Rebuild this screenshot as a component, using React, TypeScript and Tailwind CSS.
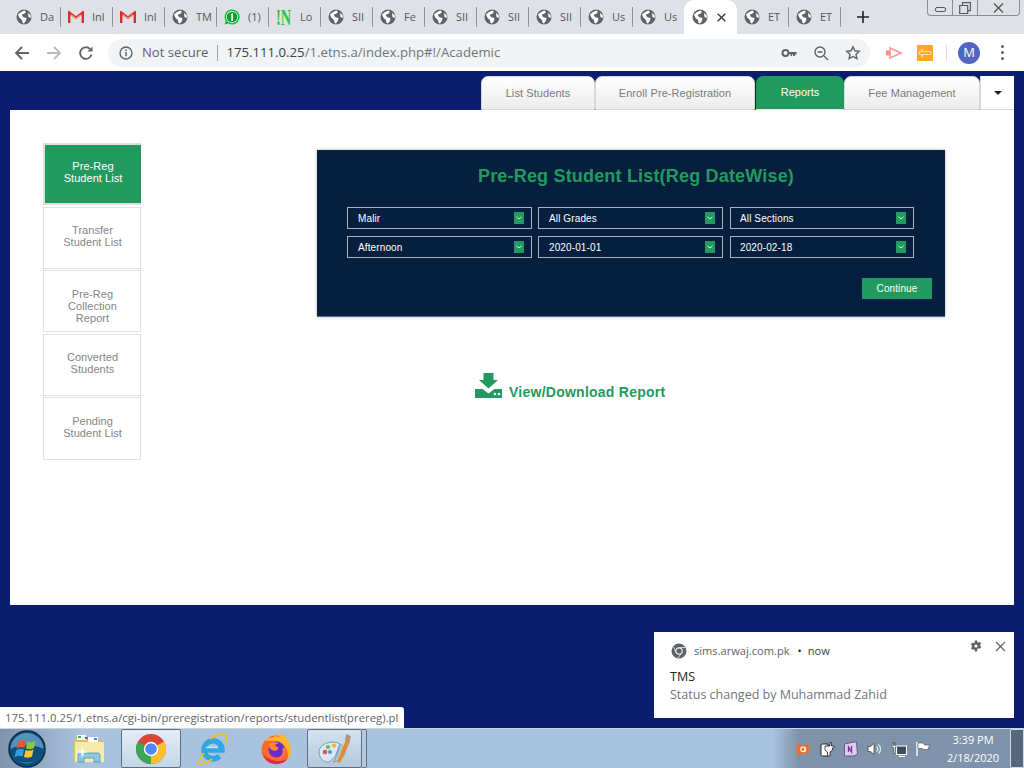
import React from 'react';

const Globe = () => (
  <svg width="16" height="16" viewBox="0 0 16 16" className="shrink-0">
    <circle cx="8" cy="8" r="7.500" fill="#5f6368" />
    <path d="M2 5.500 L5 3 L8.500 1.500 L10 3 L8 5 L6.500 5 L6 7 L8 8.500 L10.500 9 L10 12 L8 14.500 L6.500 14 L6 11 L3.500 9 Z" fill="#fff" />
    <path d="M12 4 L14.500 6 L15 9 L12.500 8 Z" fill="#fff" />
  </svg>
);

const GmailIcon = () => (
  <svg width="16" height="12" viewBox="0 0 16 12" className="shrink-0">
    <path d="M1.200 12V1.500L8 6.800l6.800-5.300V12" fill="none" stroke="#d93025" strokeWidth="2.400" />
    <path d="M3 3 8 6.800 13 3v1.500L8 8.300 3 4.500Z" fill="#e8a29c" />
  </svg>
);

const WhatsApp = () => (
  <svg width="16" height="16" viewBox="0 0 16 16" className="shrink-0">
    <path d="M8 .5a7.500 7.500 0 1 1-3.600 14L.6 15.500l1-3.700A7.500 7.500 0 0 1 8 .5Z" fill="#10c23c" />
    <circle cx="8" cy="8" r="6" fill="#fff" />
    <circle cx="8" cy="8" r="5.300" fill="#0f9d35" />
    <path d="M6.800 5 8.900 4v8H7.300V6L6.500 6.300Z" fill="#fff" />
  </svg>
);

const NIcon = () => (
  <svg width="16" height="17" viewBox="0 0 16 17" className="shrink-0">
    <text transform="translate(0 16) scale(.8 1.300)" fontFamily="Liberation Serif, serif" fontWeight="700" fontSize="18" fill="#2cc14a">!N</text>
  </svg>
);

type TabProps = { icon: React.ReactNode; label?: string; sep?: boolean; w?: string };
const Tab = ({ icon, label, sep = true, w = 'w-[52px]' }: TabProps) => (
  <div className={`${w} h-[20px] flex items-center pl-[7px] gap-[8px] ${sep ? 'border-r border-[#8f9296]' : ''}`}>
    {icon}
    <span className="whitespace-nowrap text-[11px] leading-[14px] text-[#55585c]">{label}</span>
  </div>
);

const ChromeLogo = () => (
  <svg width="32" height="32" viewBox="0 0 32 32">
    <circle cx="16" cy="16" r="15" fill="#db4437" />
    <path d="M16 16 29 8.500A15 15 0 0 1 16 31Z" fill="#fbc02d" />
    <path d="M16 16 16 31A15 15 0 0 1 3 8.500Z" fill="#3aa757" />
    <circle cx="16" cy="16" r="7.200" fill="#fff" />
    <circle cx="16" cy="16" r="5.800" fill="#4a8af4" />
  </svg>
);

const IELogo = () => (
  <svg width="32" height="32" viewBox="0 0 32 32">
    <path d="M7.500 17H25A9 9 0 1 0 22.500 23" fill="none" stroke="#2fa6e6" strokeWidth="5.500" />
    <path d="M9 14.500h12" stroke="#bfe9fb" strokeWidth="1.500" />
    <path d="M7 20C2 27 0 31 4 31c3 0 7-2 11-5M13 6C20 1 30-1 30 4c0 2-1 4-2 6" fill="none" stroke="#f0c020" strokeWidth="1.800" />
  </svg>
);

const FirefoxLogo = () => (
  <svg width="32" height="32" viewBox="0 0 32 32">
    <circle cx="16" cy="17" r="14.500" fill="#ff6a2b" />
    <path d="M5 8C7 5 9 4 11 5c3-2 6-2 8-1 1-1 1-2 1-4 6 3 11 9 11 17 0 4-1 7-3 9 1-9-4-17-12-18-4-.5-8 0-11 0Z" fill="#ffb52e" />
    <path d="M3 21c2 6 7 10 13 10 5 0 9-2 11-5-8 4-18 2-24-5Z" fill="#e5225f" />
    <circle cx="16.500" cy="16.500" r="8" fill="#6f2bc9" />
    <path d="M9 11c3-2 7-2 10-1-3 1-4 2-4 3 2 1 4 1 3 3-1 2-4 2-6 1-2-1-3-3-3-6Z" fill="#ff8a30" />
    <path d="M24.500 15c.5 5-2 9-6 10.500 4-3 5-6 4-10Z" fill="#ff9533" />
  </svg>
);

const PaintLogo = () => (
  <svg width="34" height="32" viewBox="0 0 34 32">
    <path d="M1 19c0-6 7-10 14-10 3 0 5 1 7 2l-5 13c-3 1-3 4-6 5-5 1-10-4-10-10Z" fill="#d8e8f3" stroke="#7f9ab2" />
    <path d="M22 11c4 2 6 5 5 9s-6 8-12 9c3-2 2-4 4-6Z" fill="#a9cde3" stroke="#7f9ab2" />
    <circle cx="7" cy="19" r="2.300" fill="#e0544a" />
    <circle cx="10" cy="14" r="2.100" fill="#6cb75a" />
    <circle cx="16" cy="12.500" r="2.100" fill="#e6b63c" />
    <circle cx="12" cy="19" r="2" fill="#5a93d0" />
    <path d="M27 9 19 29l3 1L31 11Z" fill="#e88a2a" />
    <path d="M28 1l5 2-2 8-4-2Z" fill="#b79468" />
  </svg>
);

const ExplorerLogo = () => (
  <svg width="32" height="30" viewBox="0 0 32 30">
    <path d="M1 4h12l2 2h16v22H1Z" fill="#dcbf63" />
    <rect x="4" y="1" width="9" height="5" fill="#fff" />
    <rect x="15" y="3" width="10" height="5" fill="#fff" />
    <rect x="5" y="2" width="3" height="2" fill="#3cb53c" />
    <rect x="12" y="3" width="3" height="2" fill="#d8443c" />
    <rect x="21" y="4" width="3" height="2" fill="#3d8ed8" />
    <path d="M2 8h29v20H2Z" fill="#f8eaaa" />
    <path d="M5 28v-7c0-1 1-2 2-2h18c1 0 2 1 2 2v7h-6v-4H11v4Z" fill="#8cc8e4" stroke="#3f89b5" strokeWidth=".7" />
    <path d="M9 12l2 5 4 1-4 1-2 5-1-5-5-1 5-1Z" fill="#fff" opacity=".85" />
  </svg>
);

const WinOrb = () => (
  <svg width="38" height="38" viewBox="0 0 38 38">
    <circle cx="19" cy="19" r="18" fill="#0f4f7d" stroke="#0c2c48" strokeWidth="1.500" />
    <path d="M2.500 19A16.500 16 0 0 1 35.500 19C26 14 12 14 2.500 19Z" fill="#6fa8cf" opacity=".75" />
    <path d="M10 31a16 14 0 0 0 18 0c-5 2-13 2-18 0Z" fill="#3fb0d8" opacity=".8" />
    <path d="M10 12c3-2 5-2 8-1l-1.500 7c-3-1-5-1-8 1Z" fill="#e8552f" />
    <path d="M19.500 11.500c3 1 5 1 8-.5l-1.500 7c-3 1.500-5 1.500-8 .5Z" fill="#8dc63f" />
    <path d="M8 20.500c3-2 5-2 8-1l-1.500 7c-3-1-5-1-8 1Z" fill="#2f9fe0" />
    <path d="M17.500 20c3 1 5 1 8-.5l-1.500 7c-3 1.500-5 1.500-8 .5Z" fill="#fcc52a" />
  </svg>
);

const Chevron = () => (
  <span className="w-[10px] h-[12px] bg-[#229a5f] flex items-center justify-center">
    <svg width="6" height="4" viewBox="0 0 6 4"><path d="M.5 .8 3 3 5.500 .8" fill="none" stroke="#d5efe2" strokeWidth="1" /></svg>
  </span>
);

const Select = ({ label, w = 'w-[185px] pl-[10px]' }: { label: string; w?: string }) => (
  <div className={`${w} h-[22px] border border-[#a9b1bb] flex items-center justify-between pr-[7px] text-[10px] tracking-[0.12px] text-white`}>
    <span>{label}</span>
    <Chevron />
  </div>
);

const SideItem = ({ lines, active, h = 'h-[62px]' }: { lines: string[]; active?: boolean; h?: string }) => (
  <div className={`w-[98px] ${h} flex flex-col items-center text-[11px] leading-[12px] tracking-[0.05px] ${active ? 'border-2 border-r-0 border-[#dedede] pt-[15px] bg-[#229a5f] text-white' : 'border border-[#e2e2e2] pt-[16.600px] pl-[1px] bg-white text-[#858585]'}`}>
    {lines.map((l) => <span key={l}>{l}</span>)}
  </div>
);

const PageTab = ({ label, w }: { label: string; w: string }) => (
  <div className={`${w} h-[34px] rounded-t-[7px] border border-[#d8d8d8] bg-gradient-to-b from-white to-[#ececec] flex items-center justify-center text-[11px] tracking-[0.08px] text-[#7a7a7a]`}>
    {label}
  </div>
);

export default function App() {
  const uiFont = { fontFamily: '"Open Sans", "Noto Sans", sans-serif' };
  return (
    <div className="relative w-[1024px] h-[768px] overflow-hidden flex flex-col bg-[#0c1c6e] font-['Liberation_Sans',Arial,sans-serif]">
      {/* Tab strip */}
      <div className="h-[34px] bg-[#dee1e6] flex items-start shrink-0" style={uiFont}>
        <div className="flex items-start pl-[9px] pt-[7px] h-[34px]">
          <Tab icon={<Globe />} label="Da" />
          <Tab icon={<GmailIcon />} label="Inl" />
          <Tab icon={<GmailIcon />} label="Inl" />
          <Tab icon={<Globe />} label="TM" />
          <Tab icon={<WhatsApp />} label="(1)" />
          <Tab icon={<NIcon />} label="Lo" />
          <Tab icon={<Globe />} label="SII" />
          <Tab icon={<Globe />} label="Fe" />
          <Tab icon={<Globe />} label="SII" />
          <Tab icon={<Globe />} label="SII" />
          <Tab icon={<Globe />} label="SII" />
          <Tab icon={<Globe />} label="Us" />
          <Tab icon={<Globe />} label="Us" sep={false} w="w-[51px]" />
        </div>
        <div className="h-[34px] w-[53px] bg-white rounded-t-[10px] flex items-center pl-[8px] gap-[9px] shrink-0">
          <Globe />
          <svg width="9" height="9" viewBox="0 0 9 9"><path d="M.7.7l7.600 7.600M8.300.7 .7 8.300" stroke="#3c4043" strokeWidth="1.500" /></svg>
        </div>
        <div className="flex items-start pt-[7px] h-[34px]">
          <Tab icon={<Globe />} label="ET" />
          <Tab icon={<Globe />} label="ET" />
        </div>
        <svg width="14" height="14" viewBox="0 0 14 14" className="ml-[15px] mt-[10px]"><path d="M7 1v12M1 7h12" stroke="#202124" strokeWidth="1.600" /></svg>
        <div className="ml-[57px] flex h-[16px] border border-t-0 border-[#8b8e92] rounded-b-[4px]">
          <div className="w-[25px] flex items-center justify-center border-r border-[#8b8e92]">
            <span className="w-[11px] h-[5px] border border-[#55585c] rounded-[2px] mt-[4px]" />
          </div>
          <div className="w-[25px] flex items-center justify-center border-r border-[#8b8e92]">
            <svg width="12" height="12" viewBox="0 0 12 12"><path d="M3.500 3V.7h8v8H9M.7 3.500h8v8h-8Z" fill="none" stroke="#55585c" strokeWidth="1.200" /></svg>
          </div>
          <div className="w-[41px] flex items-center justify-center">
            <svg width="11" height="10" viewBox="0 0 11 10"><path d="M1 .5l9 9M10 .5l-9 9" stroke="#55585c" strokeWidth="1.400" /></svg>
          </div>
        </div>
      </div>

      {/* Toolbar */}
      <div className="h-[37px] bg-white flex items-center shrink-0 pl-[14px]" style={uiFont}>
        <svg width="16" height="16" viewBox="0 0 16 16"><path d="M15 8H2M8 2 2 8l6 6" fill="none" stroke="#5f6368" strokeWidth="1.800" /></svg>
        <svg width="16" height="16" viewBox="0 0 16 16" className="ml-[16px]"><path d="M1 8h13M8 2l6 6-6 6" fill="none" stroke="#b9bbbe" strokeWidth="1.800" /></svg>
        <svg width="16" height="16" viewBox="0 0 16 16" className="ml-[16px]"><path d="M13.500 9.500A5.800 5.800 0 1 1 12 4" fill="none" stroke="#5f6368" strokeWidth="1.800" /><path d="M14.500 1.500v5h-5Z" fill="#5f6368" /></svg>
        <div className="ml-[14px] w-[762px] h-[28px] rounded-full bg-[#f1f3f4] flex items-center pl-[11px]">
          <svg width="14" height="14" viewBox="0 0 14 14"><circle cx="7" cy="7" r="6" fill="none" stroke="#5f6368" strokeWidth="1.300" /><path d="M7 6v4.200" stroke="#5f6368" strokeWidth="1.500" /><path d="M7 3.500v1.500" stroke="#5f6368" strokeWidth="1.500" /></svg>
          <span className="ml-[9px] text-[#5f6368] text-[13.100px]">Not secure</span>
          <span className="ml-[9px] w-px h-[16px] bg-[#9aa0a6]" />
          <span className="ml-[8px] text-[#3c4043] text-[13.200px]">175.111.0.25<span className="text-[#70757a]">/1.etns.a/index.php#!/Academic</span></span>
          <div className="ml-auto flex items-center gap-[16px] pr-[9px]">
            <svg width="16" height="16" viewBox="0 0 16 16"><circle cx="4.500" cy="8" r="3" fill="none" stroke="#5f6368" strokeWidth="2" /><path d="M7.500 7h8v2.500h-1.500v1.500h-2V9.500h-1V11h-1.500V9H7.500Z" fill="#5f6368" /></svg>
            <svg width="16" height="16" viewBox="0 0 16 16"><circle cx="7" cy="7" r="5" fill="none" stroke="#5f6368" strokeWidth="1.400" /><path d="M4.500 7h5M11 11l4 4" stroke="#5f6368" strokeWidth="1.400" /></svg>
            <svg width="16" height="16" viewBox="0 0 16 16"><path d="M8 1.800l1.900 4 4.400.5-3.300 3 .9 4.400L8 11.500l-3.900 2.200.9-4.400-3.300-3 4.400-.5Z" fill="none" stroke="#5f6368" strokeWidth="1.400" /></svg>
          </div>
        </div>
        <svg width="18" height="14" viewBox="0 0 18 14" className="ml-[15px]"><rect x="1" y="4.500" width="4.500" height="5" fill="#fb8c8c" /><path d="M5 2v10l11-5Z" fill="none" stroke="#fb9a9a" strokeWidth="1.700" /></svg>
        <div className="ml-[14px] w-[16px] h-[16px] bg-[#ffa726] flex items-center justify-center">
          <svg width="12" height="8" viewBox="0 0 12 8"><path d="M.5 2.500h2V.5h1v2h8v3h-8v2h-1v-2h-2Z" fill="none" stroke="#ffe7bd" strokeWidth=".9" /></svg>
        </div>
        <span className="ml-[13px] w-px h-[16px] bg-[#d9dbde]" />
        <div className="ml-[11px] w-[22px] h-[22px] rounded-full bg-[#5365c0] text-white text-[13px] flex items-center justify-center">M</div>
        <div className="ml-[21px] flex flex-col gap-[3px]">
          <span className="w-[3px] h-[3px] rounded-full bg-[#5f6368]" />
          <span className="w-[3px] h-[3px] rounded-full bg-[#5f6368]" />
          <span className="w-[3px] h-[3px] rounded-full bg-[#5f6368]" />
        </div>
      </div>

      {/* Page */}
      <div className="flex-1 flex flex-col min-h-0">
        <div className="h-[39px] pt-[5px] pr-[10px] flex justify-end shrink-0">
          <PageTab label="List Students" w="w-[114px]" />
          <PageTab label="Enroll Pre-Registration" w="w-[160px]" />
          <div className="ml-[1px] w-[88px] h-[34px] rounded-t-[7px] bg-[#229a5f] border-b border-[#e4e4e4] flex items-center justify-center text-[11px] text-white">Reports</div>
          <PageTab label="Fee Management" w="w-[136px]" />
          <div className="w-[34px] h-[34px] bg-white border-l border-b border-[#d8d8d8] flex items-center justify-center">
            <span className="w-0 h-0 border-x-[4px] border-x-transparent border-t-[4px] border-t-[#222]" />
          </div>
        </div>

        <div className="mx-[10px] h-[495px] bg-white flex pt-[33px] pl-[33px] shrink-0">
          <div className="flex flex-col gap-[1.500px] w-[98px]">
            <SideItem lines={['Pre-Reg', 'Student List']} active />
            <SideItem lines={['Transfer', 'Student List']} />
            <SideItem lines={['Pre-Reg', 'Collection', 'Report']} />
            <SideItem lines={['Converted', 'Students']} />
            <SideItem lines={['Pending', 'Student List']} h="h-[63px]" />
          </div>

          <div className="ml-[176px] mt-[7px] w-[628px] flex flex-col">
            <div className="h-[167px] bg-[#071f3e] border-b border-[#5a6b80] shadow-[0_0_3px_rgba(0,0,0,0.3)] flex flex-col pl-[30px]">
              <h1 className="mt-[16px] pr-[20px] text-center text-[18px] leading-[21px] font-bold tracking-[0.18px] text-[#229a5f]">Pre-Reg Student List(Reg DateWise)</h1>
              <div className="mt-[20px] grid grid-cols-[191px_192px_184px] gap-y-[7px]">
                <Select label="Malir" />
                <Select label="All Grades" />
                <Select label="All Sections" w="w-[184px] pl-[9px]" />
                <Select label="Afternoon" />
                <Select label="2020-01-01" />
                <Select label="2020-02-18" w="w-[184px] pl-[9px]" />
              </div>
              <div className="mt-[20px] pr-[13px] flex justify-end">
                <div className="w-[70px] h-[21px] bg-[#229a5f] text-white text-[10px] tracking-[0.1px] flex items-center justify-center">Continue</div>
              </div>
            </div>
            <div className="mt-[56px] ml-[158px] flex items-start gap-[7px]">
              <svg width="27" height="25" viewBox="0 0 27 25">
                <path d="M8.500 0h10v7H23l-9.500 8.500L4 7h4.500Z" fill="#229a5f" />
                <path d="M0 16h7.500l6 4.500 6-4.500H27v9H0Z" fill="#229a5f" />
                <circle cx="20" cy="21" r="1.300" fill="#fff" />
                <circle cx="24" cy="21" r="1.300" fill="#fff" />
              </svg>
              <span className="mt-[11px] text-[14px] leading-[16px] font-bold tracking-[0.25px] text-[#229a5f]">View/Download Report</span>
            </div>
          </div>
        </div>
      </div>

      {/* Taskbar */}
      <div className="h-[40px] shrink-0 flex items-center border-t border-[#c9d6e3] bg-[linear-gradient(90deg,#7f93ab_0%,#a9c3de_8%,#a9c3de_75.500%,#7e92aa_78%,#7e92aa_100%)]">
        <div className="w-[54px] flex justify-center shrink-0"><WinOrb /></div>
        <div className="w-[67px] flex justify-center pl-[3px] shrink-0"><ExplorerLogo /></div>
        <div className="w-[60px] h-[39px] flex items-center justify-center bg-gradient-to-b from-[#e4edf5] to-[#c3d5e7] border border-[#5f6f80] rounded-[2px] shrink-0"><ChromeLogo /></div>
        <div className="w-[64px] flex justify-center shrink-0"><IELogo /></div>
        <div className="w-[62px] flex justify-center shrink-0"><FirefoxLogo /></div>
        <div className="w-[55px] h-[39px] flex items-center justify-center bg-gradient-to-b from-[#d5e2ee] to-[#b4c9de] border border-[#5f6f80] rounded-[2px] shrink-0"><PaintLogo /></div>
        <div className="w-[5px] h-[39px] bg-[#b4c9de] border border-l-0 border-[#5f6f80] rounded-r-[2px] shrink-0" />

        <div className="ml-auto flex items-center gap-[8px] text-white" style={uiFont}>
          <svg width="16" height="16" viewBox="0 0 16 16"><path d="M2 2 6 4.500h3L13.500 1l-.5 5 2.500 3-3 1 1 4-4-1.500H6L2 15l.5-4.500L.5 8 3 6Z" fill="#f36f20" /><circle cx="8" cy="8.300" r="2.300" fill="none" stroke="#fff" strokeWidth="1.200" /><path d="M10.300 6.500v4" stroke="#fff" strokeWidth="1.200" /></svg>
          <svg width="16" height="16" viewBox="0 0 16 16"><path d="M2 4.500A1.500 1.500 0 0 1 3.500 3H9v12H3.500A1.500 1.500 0 0 1 2 13.500Z" fill="#fff" stroke="#222" /><path d="M6 5h5V1.500h1.500V5H15v1.500l-1.500.5v2l-2.500 2v4H8.500v-4L6 9Z" fill="#fff" stroke="#222" strokeWidth=".8" /></svg>
          <svg width="16" height="16" viewBox="0 0 16 16"><path d="M1.500 3 11 1h2.500l1 12L11 15H1.500Z" fill="#d9cfe6" stroke="#7a4f9c" /><path d="M5.500 11V6l3 5V5" fill="none" stroke="#7a2f9c" strokeWidth="1.300" /></svg>
          <svg width="16" height="16" viewBox="0 0 16 16"><path d="M1 5.500h2.500L7 2.500v11l-3.500-3H1Z" fill="#fff" stroke="#333" strokeWidth=".7" /><path d="M9.500 5.500a3 3 0 0 1 0 5M11.500 3.500a6 6 0 0 1 0 9" fill="none" stroke="#e8eef4" strokeWidth="1.200" /></svg>
          <svg width="16" height="16" viewBox="0 0 16 16"><path d="M5.500 5h10v8.500h-10Z" fill="#3c4c5c" stroke="#fff" strokeWidth="1.200" /><path d="M1.500 1.500h1v3h1v-3h1v3h.5v2H4v6H2.500v-6H1Z" fill="#fff" stroke="#222" strokeWidth=".5" /><path d="M8 15.500h6" stroke="#fff" strokeWidth="1.200" /></svg>
          <svg width="16" height="16" viewBox="0 0 16 16"><path d="M2 1v14" stroke="#fff" strokeWidth="1.400" /><path d="M3 2h5l1.500 2H15l-2 3 1 1.500H8.500L7 7.500H3Z" fill="#fff" stroke="#333" strokeWidth=".5" /></svg>
          <div className="w-[52px] ml-[8px] flex flex-col items-center text-[11px] leading-[18px] whitespace-nowrap">
            <span>3:39 PM</span>
            <span>2/18/2020</span>
          </div>
          <div className="w-[14px] h-[39px] ml-[3px] border border-[#d0d8e0] bg-[#55687d] rounded-[1px]" />
        </div>
      </div>

      {/* Status bubble */}
      <div className="absolute left-0 top-[707px] w-[404px] h-[21px] bg-white rounded-tr-[3px] flex items-center pl-[5px] text-[11.360px] text-[#5f6368] whitespace-nowrap" style={uiFont}>
        175.111.0.25/1.etns.a/cgi-bin/preregistration/reports/studentlist(prereg).pl
      </div>

      {/* Notification */}
      <div className="absolute left-[654px] top-[632px] w-[360px] h-[86px] bg-white pl-[16px] pt-[11px]" style={uiFont}>
        <div className="flex items-center h-[16px] text-[11.100px] text-[#5f6368]">
          <svg width="16" height="16" viewBox="0 0 16 16" className="ml-[1px]"><circle cx="8" cy="8" r="7.500" fill="#5f6368" /><circle cx="8" cy="8" r="3.200" fill="none" stroke="#e8eaed" strokeWidth="1.200" /><path d="M8 4.500h6.500M5 9.500 2.500 4M10.500 10 7 15" stroke="#e8eaed" strokeWidth=".8" /></svg>
          <span className="ml-[7px]">sims.arwaj.com.pk</span>
          <span className="ml-[8px] text-[#202124] text-[11px]">•</span>
          <span className="ml-[6px] text-[#3c4043]">now</span>
        </div>
        <div className="mt-[10px] text-[12.500px] leading-[16px] text-[#202124]">TMS</div>
        <div className="mt-[1px] text-[12.500px] leading-[18px] text-[#70757a]">Status changed by Muhammad Zahid</div>
        <div className="absolute right-[8px] top-[8px] flex items-center gap-[13px]">
          <svg width="12" height="12" viewBox="0 0 12 12"><path d="M5 .5h2l.3 1.500 1.300.6L10 1.900l1.100 1.800-1 1 .1 1.500 1.100.9L10 8.800l-1.400-.5-1.300.8L7 11.500H5l-.3-1.500-1.300-.7-1.400.5L.9 8l1.100-.9V5.600l-1.100-1L2 2.700l1.400.5L4.700 2.400Z" fill="#5f6368" /><circle cx="6" cy="6" r="1.600" fill="#fff" /></svg>
          <svg width="11" height="11" viewBox="0 0 11 11"><path d="M1 1l9 9M10 1l-9 9" stroke="#5f6368" strokeWidth="1.200" /></svg>
        </div>
      </div>
    </div>
  );
}
